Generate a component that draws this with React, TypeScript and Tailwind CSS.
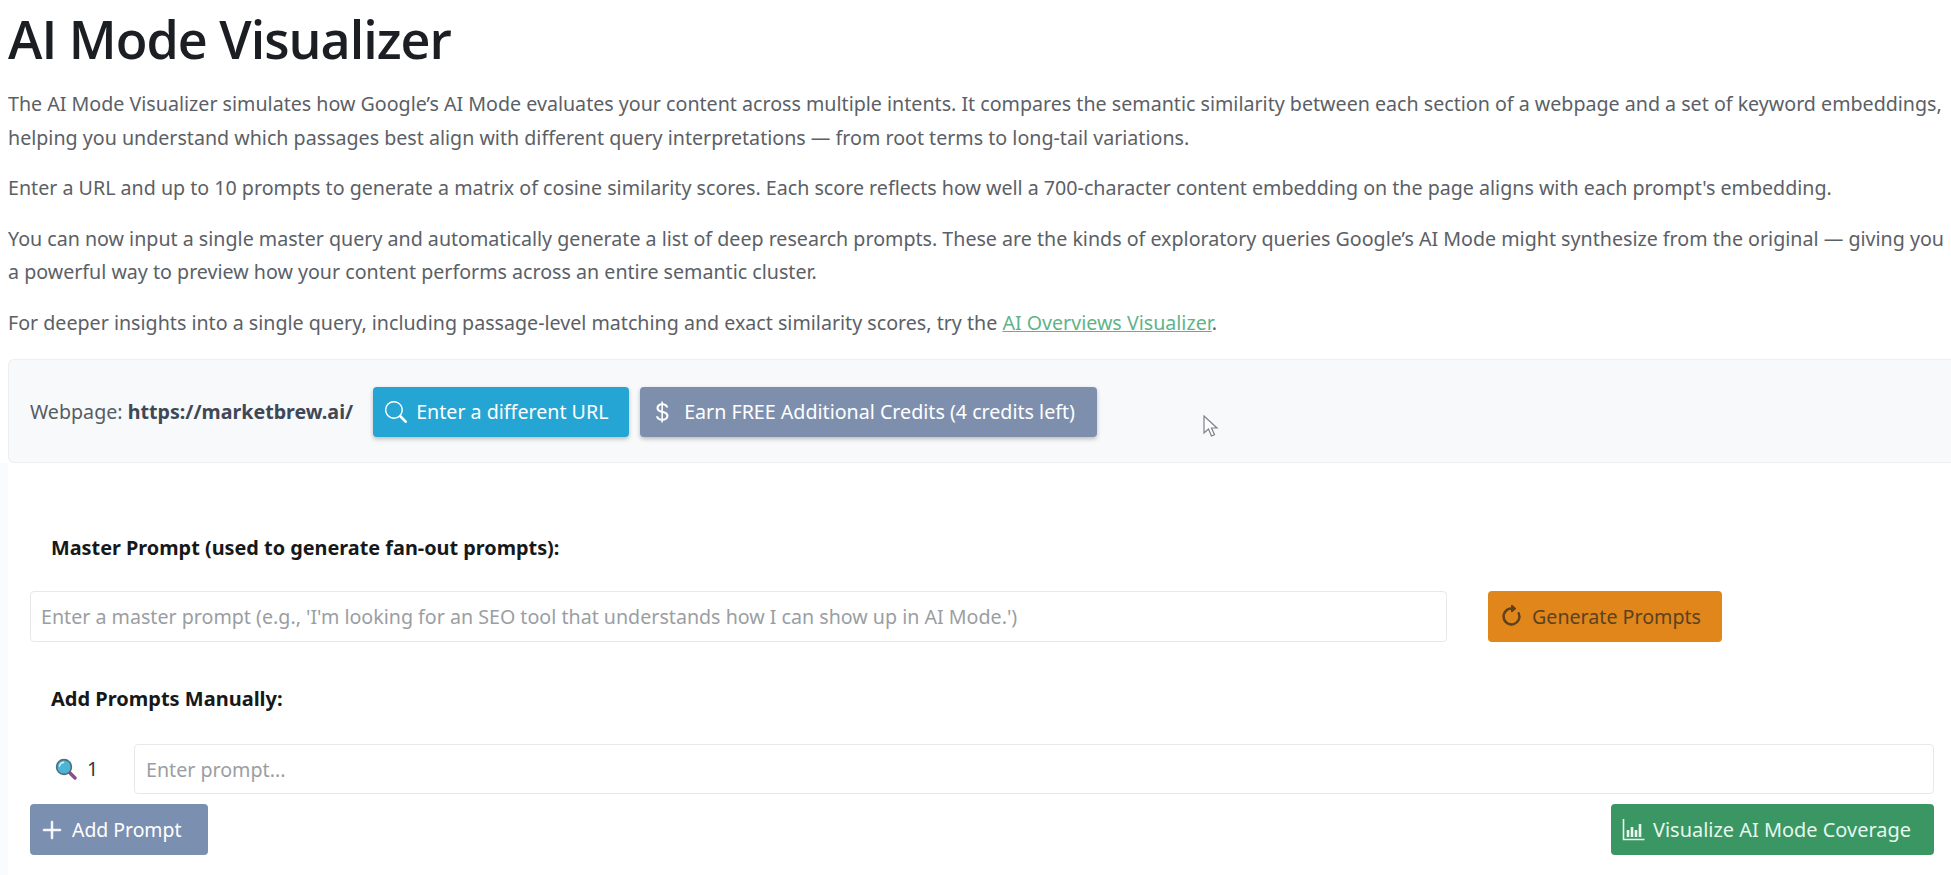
import { BsArrowClockwise, BsCurrencyDollar, BsPlusLg, BsSearch } from 'react-icons/bs'

function MagnifierEmoji() {
  return (
    <svg width="22" height="22" viewBox="0 0 22 22" aria-hidden="true">
      <line x1="13.5" y1="13.5" x2="20" y2="20" stroke="#8e4a8e" strokeWidth="3.4" strokeLinecap="round" />
      <circle cx="9" cy="9" r="7.4" fill="#4fb3d4" stroke="#4a6f80" strokeWidth="1.6" />
      <path d="M4.5 8a4.5 4.5 0 0 1 4-3.6" fill="none" stroke="#c6ecf6" strokeWidth="1.6" strokeLinecap="round" />
    </svg>
  )
}

function ChartIcon() {
  return (
    <svg width="23" height="23" viewBox="0 0 23 23" fill="none" stroke="currentColor" aria-hidden="true">
      <path d="M1.5 1v20.5H22.5" strokeWidth="1.6" />
      <path d="M6 12v7M10 9v10M14 12v7M18 6v13" strokeWidth="2.6" />
    </svg>
  )
}

export default function App() {
  return (
    <div className="relative h-[875px] w-[1951px] overflow-hidden bg-white font-['Noto_Sans',sans-serif]">
      <div className="pl-2">
        <h1 className="pt-[9px] text-[52px] leading-[60px] font-semibold text-[#1b1f23] font-['Open_Sans',sans-serif] tracking-[-1px]">
          AI Mode Visualizer
        </h1>

        <div className="mt-[18px] w-[2100px] space-y-[17px] text-[19.65px] leading-[33.5px] text-[#5b6066]">
          <p>
            The AI Mode Visualizer simulates how Google’s AI Mode evaluates your content across multiple intents. It
            compares the semantic similarity between each section of a webpage and a set of keyword embeddings,
            <br />
            helping you understand which passages best align with different query interpretations — from root terms to
            long-tail variations.
          </p>
          <p>
            Enter a URL and up to 10 prompts to generate a matrix of cosine similarity scores. Each score reflects how
            well a 700-character content embedding on the page aligns with each prompt's embedding.
          </p>
          <p>
            You can now input a single master query and automatically generate a list of deep research prompts. These
            are the kinds of exploratory queries Google’s AI Mode might synthesize from the original — giving you
            <br />a powerful way to preview how your content performs across an entire semantic cluster.
          </p>
          <p>
            For deeper insights into a single query, including passage-level matching and exact similarity scores, try
            the{' '}
            <a href="#" className="text-[#5fb38a] underline">
              AI Overviews Visualizer
            </a>
            .
          </p>
        </div>
      </div>

      <div className="mt-[20px] ml-2 flex h-[104px] items-center gap-[11px] rounded-l-md border border-r-0 border-[#eceef0] bg-[#f8f9fa] pt-[2px] pl-[21px] text-[19.65px] text-[#565c64]">
        <span className="mr-[9px]">
          Webpage: <strong className="font-bold text-[#3f4857]">https://marketbrew.ai/</strong>
        </span>
        <button className="flex h-[50px] w-[256px] items-center gap-[9px] rounded-[4px] bg-[#24a5d4] pl-[12px] text-white shadow-[0_2px_4px_rgba(0,0,0,0.25)]">
          <BsSearch size={22} />
          Enter a different URL
        </button>
        <button className="flex h-[50px] w-[457px] items-center gap-[10px] rounded-[4px] bg-[#7e8fae] pl-[10px] text-white shadow-[0_2px_4px_rgba(0,0,0,0.25)]">
          <BsCurrencyDollar size={24} />
          Earn FREE Additional Credits (4 credits left)
        </button>
      </div>

      <div className="bg-[#fafbfc] pl-2">
        <div className="h-[420px] bg-white pr-[17px] pl-[22px]">
          <label className="block pt-[72px] pl-[21px] text-[19.85px] leading-[26px] font-bold text-[#16181a]">
            Master Prompt (used to generate fan-out prompts):
          </label>
          <div className="mt-[30px] flex items-center">
            <input
              placeholder="Enter a master prompt (e.g., 'I'm looking for an SEO tool that understands how I can show up in AI Mode.')"
              className="h-[51px] w-[1417px] rounded-[4px] border border-[#e6e8ea] bg-white px-[10px] text-[19.65px] placeholder:text-[#9a9ea3]"
            />
            <button className="ml-[41px] flex h-[51px] w-[234px] items-center gap-[9px] rounded-[4px] bg-[#e0861b] pl-[12px] text-[19.65px] text-[#5a4220]">
              <BsArrowClockwise size={23} stroke="currentColor" strokeWidth={0.7} className="shrink-0" />
              Generate Prompts
            </button>
          </div>

          <label className="mt-[44px] block pl-[21px] text-[20px] leading-[26px] font-bold text-[#16181a]">
            Add Prompts Manually:
          </label>
          <div className="mt-[32px] flex items-center">
            <span className="ml-[25px] flex w-[79px] items-center gap-[10px] text-[19.65px] text-[#33383d]">
              <MagnifierEmoji />1
            </span>
            <input
              placeholder="Enter prompt..."
              className="h-[50px] flex-1 rounded-[4px] border border-[#e6e8ea] bg-white px-[11px] text-[19.65px] placeholder:text-[#9a9ea3]"
            />
          </div>
          <div className="mt-[10px] flex justify-between">
            <button className="flex h-[51px] w-[178px] items-center gap-[8px] rounded-[4px] bg-[#7b8fb0] pl-[10px] text-[19.4px] text-white">
              <BsPlusLg size={24} stroke="currentColor" strokeWidth={0.6} />
              Add Prompt
            </button>
            <button className="flex h-[51px] w-[323px] items-center gap-[8px] rounded-[4px] bg-[#3a9663] pl-[11px] text-[19.95px] text-[#e6f7ee]">
              <ChartIcon />
              Visualize AI Mode Coverage
            </button>
          </div>
        </div>
      </div>

      {/* mouse pointer caught in the recording */}
      <svg className="absolute top-[415px] left-[1203px]" width="16" height="24" viewBox="0 0 16 24" aria-hidden="true">
        <path d="M1 1v17l4.5-4 3 7 3-1.3-3-6.7H14z" fill="#fff" stroke="#7d8186" strokeWidth="1.2" />
      </svg>
    </div>
  )
}
